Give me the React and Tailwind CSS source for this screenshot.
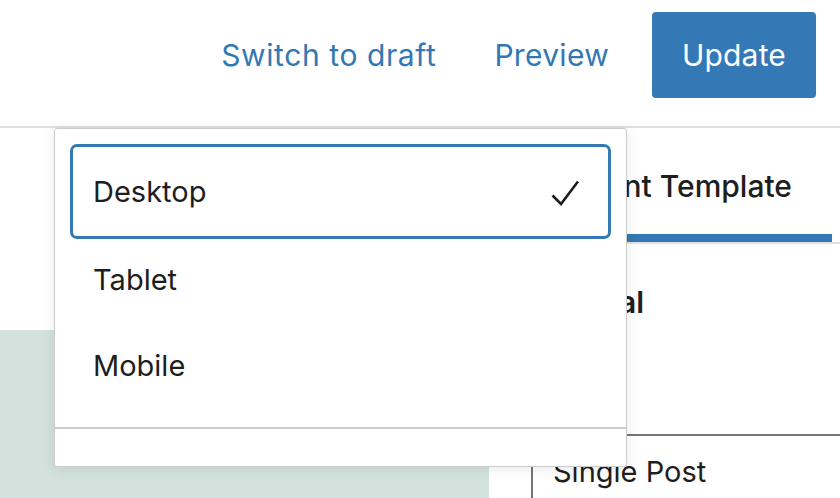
const devices = [
  { label: 'Desktop', h: 'h-[95px]', active: true },
  { label: 'Tablet', h: 'h-[82px]' },
  { label: 'Mobile', h: 'h-[89px]' },
]

function Tick() {
  return (
    <svg width="30" height="30" viewBox="0 0 30 30" fill="none" stroke="#1e1e1e" strokeWidth="2.6">
      <path d="M2.5 18.5 L11 27 L28 4.5" />
    </svg>
  )
}

function PreviewMenu() {
  return (
    <div className="absolute left-[54px] top-[128px] w-[573px] h-[339px] bg-white border border-[#cccccc] rounded-[3px] shadow-[0_2px_14px_rgba(0,0,0,0.09)] flex flex-col">
      <div className="px-[15px] pt-[15px] pb-[17px] flex flex-col">
        {devices.map(d => (
          <div
            key={d.label}
            className={`${d.h} flex items-center justify-between text-[29px] text-[#1e1e1e] ${d.active ? 'border-[3px] border-[#3479b5] rounded-[7px] pl-[20px] pr-[28px]' : 'pl-[23px] pr-[30px]'}`}
          >
            <span>{d.label}</span>
            {d.active && <Tick />}
          </div>
        ))}
      </div>
      <div className="border-t-2 border-[#cccccc] flex-1" />
    </div>
  )
}

export default function App() {
  return (
    <div className="relative w-[840px] h-[498px] overflow-hidden bg-white font-['Inter','Noto_Sans',sans-serif] text-[#1e1e1e]">
      {/* Top bar */}
      <header className="h-[128px] border-b-2 border-[#e0e0e0] flex items-start justify-end pt-[12px] pr-[24px]">
        <button className="h-[86px] text-[30px] tracking-[0.6px] text-[#3278b5] mr-[58px]">Switch to draft</button>
        <button className="h-[86px] text-[30px] tracking-[0.3px] text-[#3278b5] mr-[43px]">Preview</button>
        <button className="h-[86px] w-[164px] rounded-[4px] bg-[#3479b5] text-white text-[30px] tracking-[0.2px]">Update</button>
      </header>

      <div className="flex h-[370px]">
        {/* Canvas */}
        <div className="w-[489px] flex flex-col">
          <div className="h-[202px] bg-white" />
          <div className="flex-1 bg-[#d3e2dd]" />
        </div>

        {/* Settings sidebar */}
        <aside className="flex-1 flex flex-col bg-white">
          <div className="h-[116px] border-b-2 border-[#e0e0e0] flex justify-end pr-[8px]">
            <div className="h-full flex items-center px-[40px] pt-[10px] border-b-[8px] border-[#3479b5] text-[30px] font-medium">
              Content Template
            </div>
          </div>
          <div className="h-[190px] pl-[42px] pt-[40px]">
            <div className="text-[30px] leading-[36px] font-semibold">General</div>
          </div>
          <div className="ml-[42px] flex-1 border-l-2 border-t-2 border-[#757575] pl-[20px] pt-[14px] text-[29px]">
            Single Post
          </div>
        </aside>
      </div>

      <PreviewMenu />
    </div>
  )
}
